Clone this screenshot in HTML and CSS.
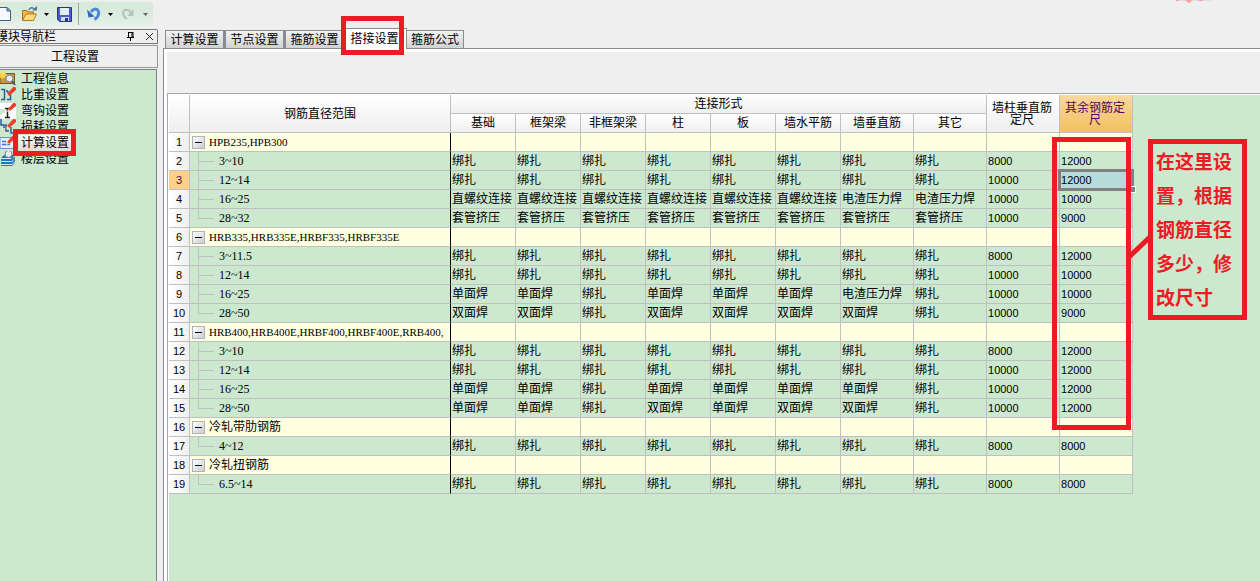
FILE: index.html
```html
<!DOCTYPE html>
<html lang="zh-CN">
<head>
<meta charset="utf-8">
<title>工程设置</title>
<link rel="stylesheet" href="styles.css">
</head>
<body>
<div class="toolbar-row">
  <div class="toolbar" role="toolbar">
    <button class="tool tool-new" aria-label="新建"><svg width="12" height="16" viewBox="0 0 12 16"><path d="M-2 1.500H7L10.500 5V14.500H-2Z" fill="#f4f9ff" stroke="#3f5f88"/><path d="M7 1.500V5H10.500Z" fill="#a9c4e4" stroke="#3f5f88"/></svg></button>
    <button class="tool tool-open" aria-label="打开"><svg width="17" height="16" viewBox="0 0 17 16"><path d="M1.500 14V4.500H6L7 6H12.500V9" fill="#f0bb4c" stroke="#a86f14"/><path d="M1.500 14.500L5 8H15.500L12.500 14.500Z" fill="#ffdb7c" stroke="#b47b1b"/><path d="M8 4C9 1 12 1 13.500 3.500" fill="none" stroke="#56789b" stroke-width="1.500"/><path d="M11 4.500H16V0Z" fill="#56789b"/></svg></button>
    <button class="tool tool-drop" aria-label="打开选项"><svg width="5" height="3"><path d="M0 0H5L2.500 3Z" fill="#000"/></svg></button>
    <button class="tool tool-save" aria-label="保存"><svg width="15" height="15" viewBox="0 0 15 15"><path d="M.5.5H14.500V14.500H2.500L.5 12.500Z" fill="#4a5bc8" stroke="#25358f"/><path d="M3 1H12V8H3Z" fill="#e3ecfb"/><path d="M4 10H12V14H4Z" fill="#d5d9e6"/><path d="M8 11H11V14H8Z" fill="#27368c"/></svg></button>
    <span class="tool-sep"></span>
    <button class="tool tool-undo" aria-label="撤销"><svg width="14" height="14" viewBox="0 0 14 14"><path d="M4 5C6 1.500 10 1 11.300 4C12.500 7 11 10 7.500 12.500" fill="none" stroke="#4b84dd" stroke-width="2.800"/><path d="M0 2.500L7.500 9.500L1.500 10.500Z" fill="#2f66c8"/></svg></button>
    <button class="tool tool-drop" aria-label="撤销选项"><svg width="5" height="3"><path d="M0 0H5L2.500 3Z" fill="#000"/></svg></button>
    <button class="tool tool-redo" aria-label="重做" disabled><svg width="14" height="14" viewBox="0 0 14 14"><path d="M10 6C7.500 2 3.500 2 2.500 4.500C1.500 7.500 3 10 6 12" fill="none" stroke="#b3c3b7" stroke-width="2"/><path d="M12.500 2V9H6.500Z" fill="#b3c3b7"/></svg></button>
    <button class="tool tool-drop" aria-label="重做选项" disabled><svg width="5" height="3"><path d="M0 0H5L2.500 3Z" fill="#666"/></svg></button>
  </div>
  <svg class="seal" width="50" height="6" viewBox="0 0 50 6"><path d="M0 0H42L34 1H6Z" fill="#ddd"/><path d="M4 0H7V1H4ZM14 0H20L18 3L15 2ZM27 0H31V1H27Z" fill="#ff9c9c"/></svg>
</div>
<div class="workspace">
  <aside class="sidebar">
    <header class="dock-title"><span class="dock-name">模块导航栏</span>
      <button class="dock-btn" aria-label="固定"><svg width="9" height="9" viewBox="0 0 9 9"><path d="M2.500 0V5M2 .5H7M6 0V5M7 0V5M1 5.500H8M4.500 6V9" fill="none" stroke="#000"/></svg></button>
      <button class="dock-btn" aria-label="关闭"><svg width="9" height="9" viewBox="0 0 9 9"><path d="M1 1L8 8M8 1L1 8" stroke="#222"/></svg></button>
    </header>
    <button class="section-btn">工程设置</button>
    <nav class="nav">
      <a class="nav-item" href="#"><svg width="16" height="16" viewBox="0 0 16 16"><path d="M0 3.500H5L6 2.500H14.500V12.500H0Z" fill="#c8963c" stroke="#7c571c"/><path d="M2.500 0V8M0 4H7M0 1.500L5 6.500M5 1.500L0 6.500" stroke="#ffd84f" stroke-width="1.500"/><circle cx="9.500" cy="7.500" r="3.500" fill="#e5eefb" stroke="#75849c"/><path d="M12 10L15 14" stroke="#4d5c73" stroke-width="2"/></svg><span>工程信息</span></a>
      <a class="nav-item" href="#"><svg width="16" height="16" viewBox="0 0 16 16"><path d="M1 2.500H4.500V12.500H1M7 3V5M7 12.500H10.500V7M7 5H9" fill="none" stroke="#2f5b98" stroke-width="1.500"/><path d="M14 -1L16 1V3L9 9L7 7Z" fill="#eb3e2c"/><path d="M6 10L7 7L9 9Z" fill="#f7d9b0"/></svg><span>比重设置</span></a>
      <a class="nav-item" href="#"><svg width="16" height="16" viewBox="0 0 16 16"><path d="M0 0H16V16H0Z" fill="#fff"/><path d="M0 6H5V10H2V12H0Z" fill="#cce8cf"/><path d="M5 5.500H9M7.500 5V14M5 14.500H10" fill="none" stroke="#222" stroke-width="1.500"/><path d="M14 -1L16 1V3L10 8L8 6Z" fill="#eb3e2c"/><path d="M7 9L8 6L10 8Z" fill="#f7d9b0"/></svg><span>弯钩设置</span></a>
      <a class="nav-item" href="#"><svg width="16" height="16" viewBox="0 0 16 16"><path d="M1 0V6H4V9M6 5V12H9M11 8V14H13" fill="none" stroke="#2f5b98" stroke-width="1.500"/><path d="M14 -1L16 1V3L9 9L7 7Z" fill="#eb3e2c"/><path d="M6 10L7 7L9 9Z" fill="#f7d9b0"/></svg><span>损耗设置</span></a>
      <a class="nav-item current" href="#"><svg width="16" height="16" viewBox="0 0 16 16"><path d="M0 2.500H13.500V13.500H0Z" fill="#e4effd" stroke="#6c91c9"/><path d="M2 6.500H6M2 9.500H10" stroke="#4679c0" stroke-width="1.500"/><path d="M14 -1L16 1V3L9 9L7 7Z" fill="#eb3e2c"/><path d="M6 10L7 7L9 9Z" fill="#f7d9b0"/></svg><span>计算设置</span><i class="mark mark-nav"></i></a>
      <a class="nav-item" href="#"><svg width="16" height="16" viewBox="0 0 16 16"><path d="M1 7L4 4H15V12L12 15H1Z" fill="#2874b6"/><path d="M1 7.500H12L15 5M1 10.500H12L15 8M1 13.500H12L15 11" fill="none" stroke="#d6eafb"/><circle cx="8.500" cy="3" r="3.500" fill="#e7eef7" stroke="#76859a"/><path d="M11 5.500L14 9" stroke="#69778d" stroke-width="2"/></svg><span>楼层设置</span></a>
    </nav>
  </aside>
  <main class="main">
    <div class="tabs" role="tablist">
      <button class="tab" role="tab">计算设置</button>
      <button class="tab" role="tab">节点设置</button>
      <button class="tab" role="tab">箍筋设置</button>
      <button class="tab active" role="tab" aria-selected="true">搭接设置<i class="mark mark-tab"></i></button>
      <button class="tab" role="tab">箍筋公式</button>
    </div>
    <section class="panel">
      <div class="sheet">
        <table class="grid">
          <colgroup><col class="c-num"><col class="c-name"><col class="c-std" span="6"><col class="c-wide" span="4"></colgroup>
          <thead>
            <tr><th rowspan="2"></th><th rowspan="2">钢筋直径范围</th><th colspan="8">连接形式</th><th class="wrap" rowspan="2">墙柱垂直筋定尺</th><th class="wrap hot" rowspan="2">其余钢筋定尺</th></tr>
            <tr><th>基础</th><th>框架梁</th><th>非框架梁</th><th>柱</th><th>板</th><th>墙水平筋</th><th>墙垂直筋</th><th>其它</th></tr>
          </thead>
          <tbody id="rows"></tbody>
        </table>
        <i class="mark mark-column"></i>
        <svg class="pointer" width="24" height="28" viewBox="0 0 24 28"><path d="M1 25L23 4" stroke="#ed1c24" stroke-width="5"/></svg>
        <p class="callout">在这里设置，根据钢筋直径多少，修改尺寸</p>
      </div>
    </section>
  </main>
</div>
<script src="app.js"></script>
</body>
</html>
```
FILE: styles.css
```css
* { box-sizing: border-box; }
body {
  margin: 0;
  min-height: 100vh;
  display: flex;
  flex-direction: column;
  overflow: hidden;
  background: #efefef;
  color: #000;
  font: 12px/16px "Liberation Sans", "Noto Sans CJK SC", sans-serif;
}
button { font: inherit; color: inherit; margin: 0; padding: 0; border: 0; background: none; }
svg { display: block; }

.toolbar-row { display: flex; height: 28px; padding-top: 2px; position: relative; }
.toolbar {
  display: flex;
  align-items: center;
  width: 153px;
  height: 24px;
  border-radius: 0 3px 3px 0;
  background: linear-gradient(#d6ead9, #dcecdf 60%, #e6f1e8);
}
.tool { flex: none; }
.tool-new { margin-right: 9px; }
.tool-open { margin-right: 6px; }
.tool-save { margin-left: 8px; }
.tool-sep { width: 1px; height: 22px; margin: 0 8px 0 6px; background: #9aa59c; }
.tool-undo { margin-right: 7px; }
.tool-redo { margin: 0 8px; }
.seal { position: absolute; top: 0; right: 38px; }

.workspace { flex: 1; display: flex; }
.sidebar { width: 158px; flex: none; display: flex; flex-direction: column; padding-top: 1px; }
.dock-title {
  display: flex;
  align-items: center;
  height: 15px;
  border: 1px solid #777;
  border-left: 0;
  border-radius: 0 2px 0 0;
  padding-right: 3px;
  gap: 10px;
}
.dock-name { flex: 1; margin-left: -4px; }
.section-btn {
  height: 23px;
  margin-top: 1px;
  padding-right: 7px;
  border: 1px solid #999;
  border-left: 0;
}
.nav {
  flex: 1;
  margin: 1px 1px 0 0;
  padding-top: 1px;
  border: 1px solid #7b828c;
  border-width: 1px 1px 0 0;
  background: #cce8cf;
}
.nav-item {
  position: relative;
  display: flex;
  height: 16px;
  gap: 3px;
  color: #000;
  text-decoration: none;
}
.nav-item span { padding: 0 2px; }
.current span { background: linear-gradient(#f6f6f6, #dedede); }

.main { flex: 1; min-width: 0; display: flex; flex-direction: column; padding-left: 5px; }
.tabs { display: flex; align-items: flex-end; height: 20px; padding-left: 2px; }
.tab {
  height: 18px;
  width: 60px;
  border: 1px solid #898c95;
  border-bottom: 0;
  border-right-width: 2px;
  background: linear-gradient(#f2f2f2, #d2d2d2);
}
.tab:last-child { width: 57px; border-left: 0; border-right-width: 1px; }
.tab.active {
  position: relative;
  height: 21px;
  width: 62px;
  margin-bottom: -1px;
  padding: 0 2px 1px 0;
  border-left: 0;
  border-right-width: 1px;
  background: #fff;
}
.panel {
  flex: 1;
  display: flex;
  flex-direction: column;
  border: solid #898c95;
  border-width: 1px 0 0 1px;
  background: #efefef;
  box-shadow: inset 3px 3px #fff;
  padding: 44px 0 0 3px;
}
.sheet {
  flex: 1;
  position: relative;
  border: solid #a4a8ac;
  border-width: 1px 0 0 1px;
  background: #cce8cf;
  box-shadow: inset 1px 1px #fff;
  padding: 1px 0 0 1px;
}
.grid { width: 964px; table-layout: fixed; border-spacing: 0; }
.c-num { width: 21px; }
.c-name { width: 261px; }
.c-std { width: 65px; }
.c-wide { width: 73px; }
.grid th, .grid td {
  height: 19px;
  padding: 0 0 0 1px;
  border: solid #c0c0c0;
  border-width: 0 1px 1px 0;
  line-height: 18px;
  font-weight: normal;
  text-align: left;
  white-space: nowrap;
}
.grid thead th { padding: 0; text-align: center; background: linear-gradient(#fff, #efefef); }
.grid thead .wrap { padding: 0 6px 0 4px; line-height: 12px; white-space: normal; }
.grid thead .hot { color: #5a005a; background: linear-gradient(#f8d9a0, #f2bf5e); }
.grid tbody th { padding: 0; text-align: center; font-size: 11px; background: linear-gradient(90deg, #fff, #efefef); }
.grid tbody .row-hot { color: #5a005a; background: #ffd08a; }
.grid .name { padding: 0; border-right-color: #000; }
.grid .length { font-size: 11px; }
.group td { background: #ffffe1; }
.label { display: flex; align-items: center; height: 18px; font-family: "Liberation Serif", "Noto Sans CJK SC", serif; }
.group .label { gap: 4px; padding-left: 2px; font-size: 11px; }
.group .cjk { font-size: 12px; }
.toggle {
  width: 13px;
  height: 13px;
  padding: 5px 2px;
  border: 1px solid #b0b4ba;
  background: linear-gradient(135deg, #fff, #c9ccd2);
}
.toggle::before { content: ""; display: block; height: 1px; background: #000; }
.leaf .label { gap: 5px; padding-left: 8px; }
.branch { width: 16px; height: 19px; flex: none; stroke: #c0c0c0; fill: none; }
.grid .selected { position: relative; background: #b5dbdb; }
.selected::before { content: ""; position: absolute; inset: -2px; border: 3px solid #808080; }
.selected::after {
  content: "";
  position: absolute;
  right: -4px;
  bottom: -4px;
  width: 5px;
  height: 5px;
  border: 1px solid #fff;
  background: #808080;
}

.mark { position: absolute; border: 5px solid #ed1c24; pointer-events: none; }
.mark-nav { left: 13px; top: -6px; width: 63px; height: 27px; z-index: 1; }
.mark-tab { left: -4px; top: -13px; width: 63px; height: 39px; }
.mark-column { left: 884px; top: 43px; width: 79px; height: 293px; }
.pointer { position: absolute; left: 960px; top: 138px; }
.callout {
  position: absolute;
  left: 980px;
  top: 45px;
  width: 99px;
  height: 181px;
  margin: 0;
  padding: 0 3px;
  border: 5px solid #ed1c24;
  color: #ed1c24;
  font: bold 19px/34px "Noto Sans CJK SC", sans-serif;
}
```
FILE: app.js
```js
const tie = n => Array(n).fill("绑扎");
const screw = [...Array(6).fill("直螺纹连接"), "电渣压力焊", "电渣压力焊"];
const sleeve = Array(8).fill("套管挤压");
const data = [
  ["HPB235,HPB300"],
  ["3~10", ...tie(8), 8000, 12000],
  ["12~14", ...tie(8), 10000, 12000],
  ["16~25", ...screw, 10000, 10000],
  ["28~32", ...sleeve, 10000, 9000],
  ["HRB335,HRB335E,HRBF335,HRBF335E"],
  ["3~11.5", ...tie(8), 8000, 12000],
  ["12~14", ...tie(8), 10000, 10000],
  ["16~25", "单面焊", "单面焊", "绑扎", "单面焊", "单面焊", "单面焊", "电渣压力焊", "绑扎", 10000, 10000],
  ["28~50", "双面焊", "双面焊", "绑扎", "双面焊", "双面焊", "双面焊", "双面焊", "绑扎", 10000, 9000],
  ["HRB400,HRB400E,HRBF400,HRBF400E,RRB400,"],
  ["3~10", ...tie(8), 8000, 12000],
  ["12~14", ...tie(8), 10000, 12000],
  ["16~25", "单面焊", "单面焊", "绑扎", "单面焊", "单面焊", "单面焊", "单面焊", "绑扎", 10000, 12000],
  ["28~50", "单面焊", "单面焊", "绑扎", "双面焊", "单面焊", "双面焊", "双面焊", "绑扎", 10000, 12000],
  ["冷轧带肋钢筋"],
  ["4~12", ...tie(8), 8000, 8000],
  ["冷轧扭钢筋"],
  ["6.5~14", ...tie(8), 8000, 8000]
];
const selectedRow = 2;

document.getElementById("rows").innerHTML = data.map((row, i) => {
  const group = row.length === 1;
  const last = !data[i + 1] || data[i + 1].length === 1;
  const lead = group
    ? '<button class="toggle" aria-label="折叠"></button>'
    : `<svg class="branch" viewBox="0 0 16 19"><path d="M.5 0V${last ? 9.5 : 19}M0 9.500H16"/></svg>`;
  const cjk = group && !row[0].startsWith("H") ? " cjk" : "";
  let cells = "";
  for (let c = 1; c <= 10; c++) {
    const cls = (c > 8 ? "length" : "") + (i === selectedRow && c === 10 ? " selected" : "");
    cells += `<td class="${cls}">${row[c] ?? ""}</td>`;
  }
  return `<tr class="${group ? "group" : "leaf"}"><th class="${i === selectedRow ? "row-hot" : ""}">${i + 1}</th>` +
    `<td class="name"><div class="label${cjk}">${lead}<span>${row[0]}</span></div></td>${cells}</tr>`;
}).join("");
```
